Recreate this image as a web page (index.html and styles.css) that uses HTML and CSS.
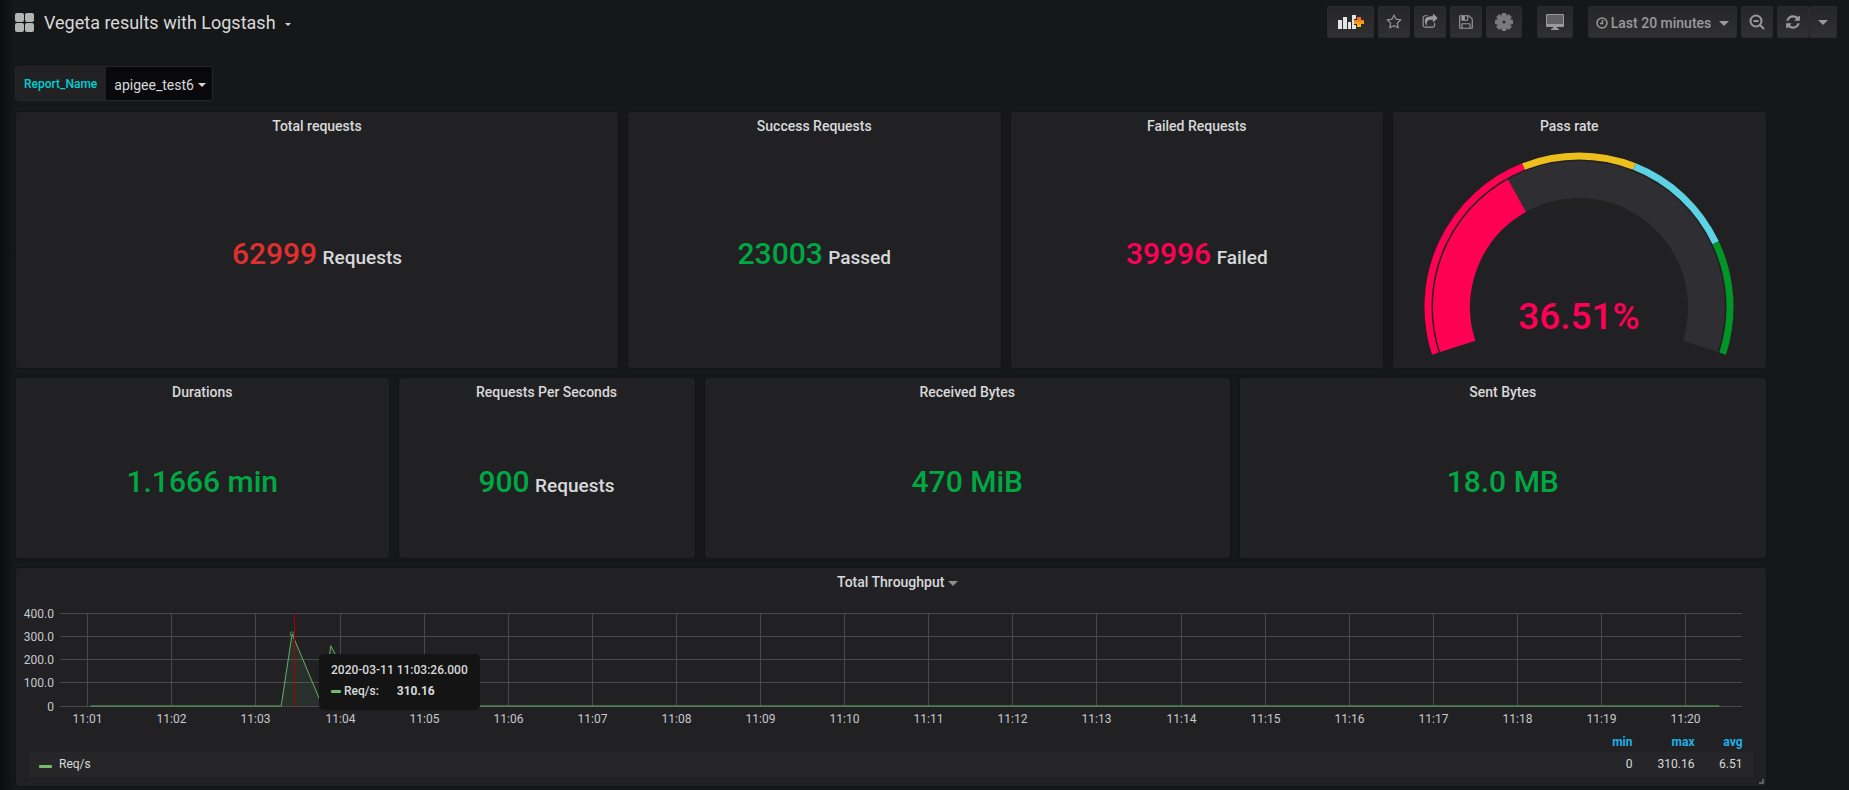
FILE: index.html
```
<!DOCTYPE html>
<html lang="en">
  <head>
    <meta charset="UTF-8" />
    <meta name="viewport" content="width=device-width, initial-scale=1.0" />
    <title>Vegeta results with Logstash</title>
    <link rel="stylesheet" href="styles.css">
  </head>
  <body>
    <header class="navbar">
      <button class="title" type="button">
        <svg class="title-icon" width="19" height="19" viewBox="0 0 19 19">
          <rect width="9" height="9" rx="2" />
          <rect x="10" width="9" height="9" rx="2" />
          <rect y="10" width="9" height="9" rx="2" />
          <rect x="10" y="10" width="9" height="9" rx="2" />
        </svg>
        <span>Vegeta results with Logstash</span>
        <i class="caret small"></i>
      </button>
      <div class="toolbar">
        <div class="group">
          <button class="btn add" type="button" aria-label="Add panel">
            <svg width="26" height="15" viewBox="0 0 26 15">
              <defs>
                <linearGradient id="plus" x1="0" y1="0" x2="0" y2="1">
                  <stop offset="0" stop-color="#f05a28" />
                  <stop offset="1" stop-color="#fbca0a" />
                </linearGradient>
              </defs>
              <path fill="#e3e3e3" d="M0 5h4v9H0zM5 2h4v12H5zM10 7h3v7h-3zM14 0h4v4h-2v6h2v4h-4z" />
              <path fill="url(#plus)" d="M19 2h4v3h3v4h-3v3h-4V9h-3V5h3z" />
            </svg>
          </button>
          <button class="btn" type="button" aria-label="Star">
            <svg width="16" height="16" viewBox="0 0 1792 1792"><path d="M1201 1004l306-297-422-62-189-382-189 382-422 62 306 297-73 421 378-199 377 199zm527-357q0 22-26 48l-363 354 86 500q1 7 1 20 0 50-41 50-19 0-40-12l-449-236-449 236q-22 12-40 12-21 0-31.5-14.5t-10.5-35.5q0-6 2-20l86-500-364-354q-25-27-25-48 0-37 56-46l502-73 225-455q19-41 49-41t49 41l225 455 502 73q56 9 56 46z" /></svg>
          </button>
          <button class="btn" type="button" aria-label="Share">
            <svg width="16" height="16" viewBox="0 0 1792 1792"><path d="M1472 989v259q0 119-84.5 203.5t-203.5 84.5h-832q-119 0-203.5-84.5t-84.5-203.5v-832q0-119 84.5-203.5t203.5-84.5h255q13 0 22.5 9.5t9.5 22.5q0 27-26 32-77 26-133 60-10 4-16 4h-112q-66 0-113 47t-47 113v832q0 66 47 113t113 47h832q66 0 113-47t47-113v-214q0-19 18-29 28-13 54-37 16-16 35-8 21 9 21 29zm237-496l-384 384q-18 19-45 19-12 0-25-5-39-17-39-59v-192h-160q-323 0-438 131-119 137-74 473 3 23-20 34-8 2-12 2-16 0-26-13-10-14-21-31t-39.5-68.5-49.5-99.5-38.5-114-17.5-122q0-49 3.5-91t14-90 28-88 47-81.5 68.5-74 94.5-61.5 124.5-48.5 159.5-30.5 196.5-11h160v-192q0-42 39-59 13-5 25-5 26 0 45 19l384 384q19 19 19 45t-19 45z" /></svg>
          </button>
          <button class="btn" type="button" aria-label="Save">
            <svg width="16" height="16" viewBox="0 0 1792 1792"><path d="M512 1536h768v-384h-768v384zm896 0h128v-896q0-14-10-38.5t-20-34.5l-281-281q-10-10-34-20t-39-10v416q0 40-28 68t-68 28h-576q-40 0-68-28t-28-68v-416h-128v1280h128v-416q0-40 28-68t68-28h832q40 0 68 28t28 68v416zm-384-928v-320q0-13-9.5-22.5t-22.5-9.5h-192q-13 0-22.5 9.5t-9.5 22.5v320q0 13 9.5 22.5t22.5 9.5h192q13 0 22.5-9.5t9.5-22.5zm640 32v928q0 40-28 68t-68 28h-1344q-40 0-68-28t-28-68v-1344q0-40 28-68t68-28h928q40 0 88 20t76 48l280 280q28 28 48 76t20 88z" /></svg>
          </button>
          <button class="btn wide" type="button" aria-label="Settings">
            <svg width="18" height="18" viewBox="-9 -9 18 18">
              <g fill="#7a7a7c">
                <path id="teeth" d="M-2-9h4l1 4h-6zM-2 9h4l1-4h-6zM-9-2v4l4 1v-6zM9-2v4l-4 1v-6z" />
                <use href="#teeth" transform="rotate(45)" />
              </g>
              <circle r="4" fill="none" stroke="#7a7a7c" stroke-width="5" />
            </svg>
          </button>
        </div>
        <button class="btn wide" type="button" aria-label="Cycle view mode">
          <svg width="18" height="16" viewBox="0 0 18 16">
            <path fill-rule="evenodd" d="M1 0h16q1 0 1 1v11q0 1-1 1h-6v1l2 1v1H5v-1l2-1v-1H1q-1 0-1-1V1q0-1 1-1zM1 1v9h16V1z" />
            <path fill="#626264" d="M1 1h16v9H1z" />
          </svg>
        </button>
        <div class="group">
          <button class="btn time" type="button">
            <svg width="12" height="12" viewBox="0 0 12 12" class="line clock">
              <circle cx="6" cy="6" r="5" />
              <path d="M6.500 3v3.500H4" />
            </svg>
            <span>Last 20 minutes</span>
            <i class="caret"></i>
          </button>
          <button class="btn" type="button" aria-label="Zoom out">
            <svg width="16" height="16" viewBox="0 0 16 16" class="line thick">
              <circle cx="7" cy="7" r="5.500" />
              <path d="M4.500 7h5M11 11l4 4" />
            </svg>
          </button>
          <div class="joined">
            <button class="btn" type="button" aria-label="Refresh">
              <svg width="16" height="16" viewBox="0 0 1792 1792"><path d="M1639 1056q0 5-1 7-64 268-268 434.500t-478 166.500q-146 0-282.500-55t-243.500-157l-129 129q-19 19-45 19t-45-19-19-45v-448q0-26 19-45t45-19h448q26 0 45 19t19 45-19 45l-137 137q71 66 161 102t187 36q134 0 250-65t186-179q11-17 53-117 8-23 30-23h192q13 0 22.500 9.500t9.500 22.500zm25-800v448q0 26-19 45t-45 19h-448q-26 0-45-19t-19-45 19-45l138-138q-148-137-349-137-134 0-250 65t-186 179q-11 17-53 117-8 23-30 23h-199q-13 0-22.500-9.500t-9.500-22.500v-7q65-268 270-434.500t480-166.500q146 0 284 55.500t245 156.500l130-129q19-19 45-19t45 19 19 45z" /></svg>
            </button>
            <button class="btn arrow" type="button" aria-label="Refresh interval"><i class="caret"></i></button>
          </div>
        </div>
      </div>
    </header>

    <div class="submenu">
      <label for="report">Report_Name</label>
      <div class="select">
        <select id="report">
          <option>apigee_test6</option>
        </select>
        <i class="caret"></i>
      </div>
    </div>

    <main class="dashboard">
      <section class="panel w8 tall">
        <h2>Total requests</h2>
        <p class="stat red">62999 <small>Requests</small></p>
      </section>
      <section class="panel w5 tall">
        <h2>Success Requests</h2>
        <p class="stat green">23003 <small>Passed</small></p>
      </section>
      <section class="panel w5 tall">
        <h2>Failed Requests</h2>
        <p class="stat pink">39996 <small>Failed</small></p>
      </section>
      <section class="panel w5 tall rate">
        <h2>Pass rate</h2>
        <svg class="gauge" width="320" height="228" viewBox="-160 -167 320 228">
          <g fill="none" stroke-width="7">
            <path pathLength="100" stroke="#ff0055" stroke-dasharray="40 100" d="M-143.600 46.700A151 151 0 1 1 143.600 46.700" />
            <path pathLength="100" stroke="#ecbf1c" stroke-dasharray="0 40 20 100" d="M-143.600 46.700A151 151 0 1 1 143.600 46.700" />
            <path pathLength="100" stroke="#5cd2e4" stroke-dasharray="0 60 20 100" d="M-143.600 46.700A151 151 0 1 1 143.600 46.700" />
            <path pathLength="100" stroke="#009627" stroke-dasharray="0 80 20 100" d="M-143.600 46.700A151 151 0 1 1 143.600 46.700" />
          </g>
          <g fill="none" stroke-width="37">
            <path stroke="#2f2e33" d="M-121.300 39.400A127.500 127.500 0 1 1 121.300 39.400" />
            <path pathLength="100" stroke="#ff0055" stroke-dasharray="36.510 100" d="M-121.300 39.400A127.500 127.500 0 1 1 121.300 39.400" />
          </g>
          <text x="0" y="22" text-anchor="middle">36.51%</text>
        </svg>
      </section>

      <section class="panel w5 first">
        <h2>Durations</h2>
        <p class="stat green">1.1666 min</p>
      </section>
      <section class="panel w4">
        <h2>Requests Per Seconds</h2>
        <p class="stat green">900 <small>Requests</small></p>
      </section>
      <section class="panel w7">
        <h2>Received Bytes</h2>
        <p class="stat green">470 MiB</p>
      </section>
      <section class="panel w7">
        <h2>Sent Bytes</h2>
        <p class="stat green">18.0 MB</p>
      </section>

      <section class="panel w23 graph">
        <h2>Total Throughput<i class="caret"></i></h2>
        <div class="chart">
          <svg id="plot" height="130"></svg>
          <div class="tooltip">
            <div>2020-03-11 11:03:26.000</div>
            <div class="tooltip-row"><i class="dash"></i><span>Req/s:</span><b>310.16</b></div>
          </div>
        </div>
        <table class="legend">
          <thead>
            <tr><th></th><th>min</th><th>max</th><th>avg</th></tr>
          </thead>
          <tbody>
            <tr><td><i class="dash big"></i>Req/s</td><td>0</td><td>310.16</td><td>6.51</td></tr>
          </tbody>
        </table>
        <svg class="resize" width="5" height="5" viewBox="0 0 5 5"><path d="M3 0h2v5H0V3h3z" /></svg>
      </section>
    </main>

    <script>
      // minutes after 11:00, requests per second
      const points = [
        [1.03, 0], [3.3, 0], [3.43, 310.16], [3.79, 0],
        [3.89, 259], [4.27, 0], [20.4, 0],
      ];
      const start = 0.67;
      const end = 20.67;
      const left = 44;
      const right = 24;
      const top0 = 17;
      const bottom = 110;
      const plot = document.querySelector("#plot");
      const tooltip = document.querySelector(".tooltip");

      function draw() {
        const width = plot.parentElement.clientWidth;
        const x = (t) => left + ((t - start) / (end - start)) * (width - left - right);
        const y = (v) => bottom - (v / 400) * (bottom - top0);
        let out = "";
        for (let v = 0; v <= 400; v += 100) {
          const py = Math.floor(y(v)) + 0.5;
          out += `<line class="grid" x1="${left}" x2="${width - right}" y1="${py}" y2="${py}" />`;
          out += `<text x="${left - 6}" y="${py + 4}" text-anchor="end">${v ? v.toFixed(1) : 0}</text>`;
        }
        for (let m = 1; m <= 20; m++) {
          const px = Math.floor(x(m)) + 0.5;
          out += `<line class="grid" x1="${px}" x2="${px}" y1="${top0}" y2="${bottom}" />`;
          out += `<text x="${px}" y="${bottom + 17}" text-anchor="middle">11:${String(m).padStart(2, "0")}</text>`;
        }
        const line = points.map(([t, v]) => `${x(t).toFixed(1)},${y(v).toFixed(1)}`).join(" ");
        out += `<polygon class="area" points="${line}" />`;
        out += `<polyline class="series" points="${line}" />`;
        out += `<circle class="point" cx="${x(3.43)}" cy="${y(310.16)}" r="2" />`;
        const cross = Math.floor(x(3.46)) + 0.5;
        out += `<line class="cross" x1="${cross}" x2="${cross}" y1="${top0}" y2="${bottom}" />`;
        plot.setAttribute("width", width);
        plot.innerHTML = out;
        tooltip.style.left = Math.round(cross + 24) + "px";
      }
      draw();
      window.addEventListener("resize", draw);
    </script>
  </body>
</html>
```
FILE: styles.css
```
* {
  margin: 0;
  padding: 0;
  box-sizing: border-box;
  font-family: Roboto, sans-serif;
}
body {
  min-height: 100vh;
  color: #d8d9da;
  background: linear-gradient(90deg, #0b0c0d, #161719 14px);
  font-size: 14px;
}
button {
  border: 0;
  background: none;
  color: inherit;
  cursor: pointer;
}
.navbar {
  display: flex;
  justify-content: space-between;
  padding: 6px 12px 0 15px;
}
.title {
  display: flex;
  align-items: center;
  height: 33px;
  font-size: 18px;
}
.title-icon {
  fill: #b3b4b4;
  margin-right: 10px;
}
.title .caret {
  margin: 4px 0 0 9px;
}
.caret {
  display: inline-block;
  border: 4px solid transparent;
  border-top-color: currentColor;
  border-bottom: 0;
}
.caret.small {
  border-width: 3px;
  border-bottom: 0;
}
.toolbar {
  display: flex;
  gap: 15px;
}
.group {
  display: flex;
  gap: 4px;
}
.btn {
  display: flex;
  align-items: center;
  justify-content: center;
  width: 32px;
  height: 32px;
  border: 1px solid #2b2b2d;
  border-radius: 2px;
  background: linear-gradient(#262628, #303032);
  color: #9a9a9b;
  fill: currentColor;
}
.btn.add {
  width: 47px;
}
.btn.wide {
  width: 36px;
}
.btn.time {
  width: 149px;
  gap: 3px;
  padding-top: 2px;
  font-size: 14px;
  font-weight: 500;
}
.btn.time .caret,
.btn.arrow .caret,
.panel h2 .caret {
  border-width: 5px;
  border-bottom: 0;
}
.btn.time .caret {
  margin-left: 5px;
}
.btn.arrow {
  width: 28px;
}
.joined {
  display: flex;
}
.line {
  fill: none;
  stroke: currentColor;
}
.line.clock {
  stroke-width: 1.5;
}
.line.thick {
  stroke-width: 2;
}
.submenu {
  display: flex;
  width: max-content;
  height: 35px;
  margin: 27px 0 11px 15px;
  border: 1px solid #262628;
  border-radius: 3px;
  overflow: hidden;
}
.submenu label {
  padding: 1px 9px 0 8px;
  background: #212124;
  color: #00cfd1;
  font-size: 12px;
  font-weight: 500;
  line-height: 33px;
}
.select {
  display: flex;
  align-items: center;
  padding: 2px 6px 0 8px;
  background: #09090b;
}
.select select {
  appearance: none;
  border: 0;
  background: none;
  color: #d8d9da;
  font-size: 14px;
}
.select .caret {
  margin-left: 4px;
}
.dashboard {
  display: grid;
  grid-template-columns: repeat(24, minmax(0, 1fr));
  gap: 10px;
  padding: 0 7px 0 16px;
}
.panel {
  position: relative;
  display: flex;
  flex-direction: column;
  min-height: 180px;
  border-radius: 3px;
  background: #212124;
  box-shadow: 0 0 0 1px #141414;
}
.tall {
  min-height: 256px;
}
.w4 {
  grid-column: span 4;
}
.w5 {
  grid-column: span 5;
}
.w7 {
  grid-column: span 7;
}
.w8 {
  grid-column: span 8;
}
.w23 {
  grid-column: span 23;
}
.first {
  grid-column: 1 / span 5;
}
.panel h2 {
  padding-top: 1px;
  font-size: 14px;
  font-weight: 500;
  line-height: 27px;
  text-align: center;
}
.panel h2 .caret {
  margin: 0 -14px 1px 4px;
  color: #8e8e8e;
}
.rate h2 {
  padding-right: 20px;
}
.stat {
  margin: auto;
  font-size: 30px;
  font-weight: 500;
  line-height: 36px;
}
.stat small {
  margin-left: -2px;
  color: #d8d9da;
  font-size: 19px;
  line-height: 1;
}
.red {
  color: #e02f2f;
}
.green {
  color: #00a843;
}
.pink {
  color: #ff0055;
}
.gauge {
  align-self: center;
}
.gauge text {
  fill: #ff0055;
  font-size: 37px;
  font-weight: 500;
}
.graph {
  min-height: 218px;
}
.chart {
  position: relative;
  height: 130px;
}
#plot {
  display: block;
}
#plot text {
  fill: #c8c9ca;
  font-size: 12px;
}
.grid {
  stroke: #4a4a4c;
}
.area {
  fill: rgba(115, 191, 105, 0.1);
}
.series {
  fill: none;
  stroke: #62b161;
}
.point {
  fill: none;
  stroke: #4f8a50;
}
.cross {
  stroke: #aa0000;
}
.tooltip {
  position: absolute;
  top: 58px;
  padding: 6px 12px;
  height: 56px;
  border-radius: 5px;
  background: #141414;
  font-size: 12px;
  font-weight: 500;
  line-height: 21px;
  white-space: nowrap;
}
.tooltip-row {
  display: flex;
  align-items: center;
}
.tooltip-row b {
  margin-left: 18px;
}
.dash {
  display: inline-block;
  width: 10px;
  height: 3px;
  margin-right: 3px;
  border-radius: 1px;
  background: #73bf69;
}
.dash.big {
  width: 13px;
  height: 3px;
  margin-right: 7px;
}
.legend {
  margin: 4px 13px 0;
  border-collapse: collapse;
  font-size: 12px;
}
.legend th {
  height: 22px;
  padding-top: 2px;
  color: #1fb0e8;
  font-weight: 700;
  text-align: right;
}
.legend td {
  height: 25px;
  padding-bottom: 2px;
  text-align: right;
  background: #262628;
}
.legend th,
.legend td {
  width: 62px;
}
.legend th:first-child,
.legend td:first-child {
  width: auto;
  padding-left: 10px;
  text-align: left;
}
.legend th:last-child,
.legend td:last-child {
  width: 58px;
  padding-right: 10px;
}
.resize {
  position: absolute;
  right: 2px;
  bottom: 2px;
  fill: #5f5f61;
}
```
